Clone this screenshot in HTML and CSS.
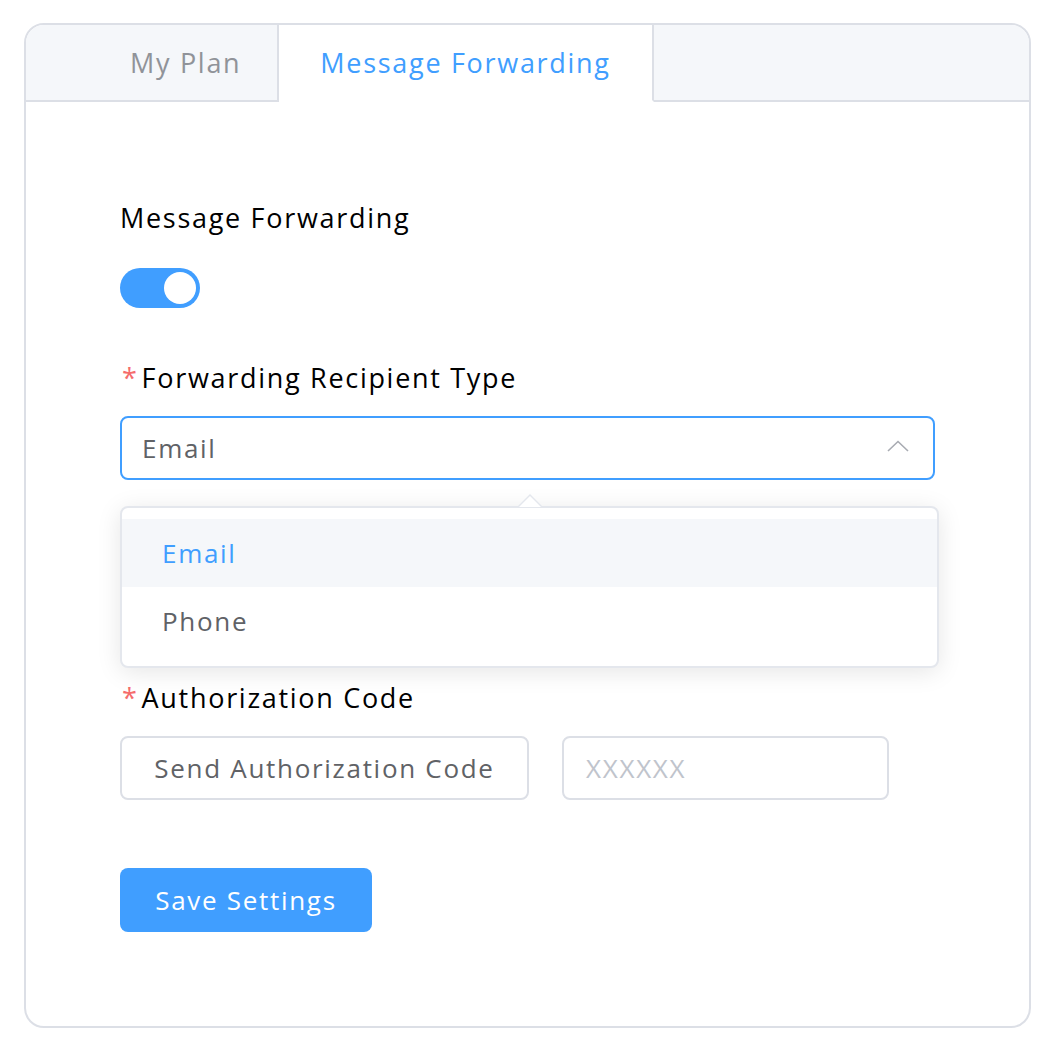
FILE: index.html
```html
<!DOCTYPE html>
<html lang="en">
<head>
    <meta charset="UTF-8">
    <meta name="viewport" content="width=device-width, initial-scale=1.0">
    <title>Message Forwarding</title>
    <link rel="stylesheet" href="styles.css">
</head>
<body>
    <div class="card">
        <div class="tabs">
            <div class="tab tab-first">My Plan</div>
            <div class="tab tab-active">Message Forwarding</div>
        </div>

        <div class="card-body">
            <div class="form-item">
                <div class="form-label">Message Forwarding</div>
                <div class="form-control">
                    <span class="switch"><span class="switch-knob"></span></span>
                </div>
            </div>

            <!-- open dropdown covers the field below the select -->
            <div class="form-item select-item">
                <div class="form-label"><span class="req">*</span>Forwarding Recipient Type</div>
                <div class="form-control">
                    <div class="select">
                        <span>Email</span>
                        <svg class="select-arrow" width="22" height="12" viewBox="0 0 22 12">
                            <path d="M1 11 L11 1.5 L21 11" fill="none" stroke="#a8abb2" stroke-width="1.6"/>
                        </svg>
                    </div>
                </div>

                <div class="dropdown">
                    <span class="dropdown-caret"></span>
                    <div class="option option-selected">Email</div>
                    <div class="option">Phone</div>
                </div>
            </div>

            <div class="form-item">
                <div class="form-label"><span class="req">*</span>Authorization Code</div>
                <div class="form-control code-row">
                    <button class="btn-plain">Send Authorization Code</button>
                    <div class="input code-input"><span class="placeholder">XXXXXX</span></div>
                </div>
            </div>

            <button class="btn-primary">Save Settings</button>
        </div>
    </div>
</body>
</html>
```

FILE: styles.css
```css
body {
    margin: 0;
    padding: 23px 23px 18px 24px;
    background: #fff;
    font-family: "Open Sans", "Liberation Sans", sans-serif;
    letter-spacing: 1.7px;
}
.card {
    border: 2px solid #dcdfe6;
    border-radius: 20px;
    overflow: hidden;
    background: #fff;
}
.tabs {
    display: flex;
    height: 75px;
    background: #f5f7fa;
    border-bottom: 2px solid #dcdfe6;
}
.tab {
    display: flex;
    align-items: center;
    padding: 0 40px;
    font-size: 27px;
    color: #909399;
    margin-bottom: -2px;
    border-bottom: 2px solid transparent;
}
.tab-first {
    padding-left: 104px;
    padding-right: 36px;
    border-right: 2px solid #dcdfe6;
    border-bottom-color: #dcdfe6;
}
.tab-active {
    color: #409eff;
    background: #fff;
    padding: 0 41px 0 41px;
    border-right: 2px solid #dcdfe6;
    border-bottom-color: #fff;
}
.card-body {
    padding: 94px;
}
.form-item {
    margin-bottom: 36px;
    position: relative;
}
.select-item {
    margin-bottom: 196px;
}
.form-label {
    height: 44px;
    line-height: 44px;
    font-size: 27px;
    color: #000;
    margin-bottom: 16px;
}
.req {
    color: #f56c6c;
    margin: 0 3px 0 2px;
}
.form-control {
    height: 64px;
    display: flex;
    align-items: center;
}
.switch {
    position: relative;
    width: 80px;
    height: 40px;
    border-radius: 20px;
    background: #409eff;
}
.switch-knob {
    position: absolute;
    top: 4px;
    right: 4px;
    width: 32px;
    height: 32px;
    border-radius: 50%;
    background: #fff;
}
.select {
    box-sizing: border-box;
    width: 100%;
    height: 64px;
    border: 2px solid #409eff;
    border-radius: 8px;
    display: flex;
    align-items: center;
    justify-content: space-between;
    padding: 0 24px 0 20px;
    font-size: 26px;
    color: #606266;
}
.select-arrow {
    margin-top: -4px;
}
.dropdown {
    position: absolute;
    left: 0;
    right: -4px;
    top: 150px;
    z-index: 5;
    background: #fff;
    border: 2px solid #e4e7ed;
    border-radius: 8px;
    padding: 11px 0;
    box-shadow: 0 4px 24px rgba(0, 0, 0, 0.1);
}
.dropdown-caret {
    position: absolute;
    top: -14px;
    left: 395px;
    width: 0;
    height: 0;
    border-left: 13px solid transparent;
    border-right: 13px solid transparent;
    border-bottom: 13px solid #e4e7ed;
}
.dropdown-caret::after {
    content: "";
    position: absolute;
    left: -11px;
    top: 2px;
    border-left: 11px solid transparent;
    border-right: 11px solid transparent;
    border-bottom: 11px solid #fff;
}
.option {
    height: 68px;
    line-height: 68px;
    padding-left: 40px;
    font-size: 26px;
    color: #606266;
}
.option-selected {
    background: #f5f7fa;
    color: #409eff;
}
.input {
    box-sizing: border-box;
    height: 64px;
    border: 2px solid #dcdfe6;
    border-radius: 8px;
    display: flex;
    align-items: center;
    padding: 0 22px;
    font-size: 26px;
}
.placeholder {
    color: #c0c4cc;
}
.code-row {
    gap: 33px;
}
.btn-plain {
    box-sizing: border-box;
    width: 409px;
    height: 64px;
    background: #fff;
    border: 2px solid #dcdfe6;
    border-radius: 8px;
    font-family: inherit;
    letter-spacing: 1.7px;
    font-size: 26px;
    color: #606266;
    padding: 0;
}
.code-input {
    width: 327px;
}
.btn-primary {
    margin-top: 68px;
    width: 252px;
    height: 64px;
    background: #409eff;
    border: none;
    border-radius: 8px;
    color: #fff;
    font-family: inherit;
    letter-spacing: 1.7px;
    font-size: 26px;
    padding: 0;
    display: block;
}
```
